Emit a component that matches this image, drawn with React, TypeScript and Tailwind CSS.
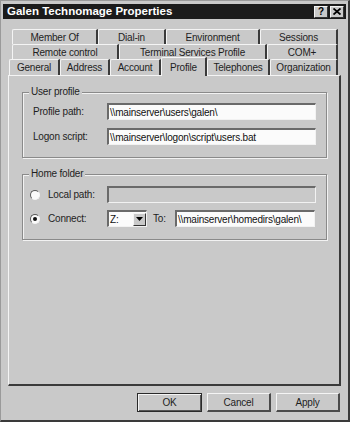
import React from "react";

const Tab = ({ w, label, first }: { w: number; label: string; first?: boolean }) => (
  <div
    className={`h-full flex items-center justify-center border-t border-l border-t-[#f4f4f4] border-l-[#f4f4f4] border-r-2 border-r-[#3a3a3a] rounded-tl-[2px] text-[10px] tracking-[-0.2px] text-[#1e1e1e] ${first ? "" : ""}`}
    style={{ width: w }}
  >
    {label}
  </div>
);

const TextBox = ({ w, value, disabled }: { w: number; value?: string; disabled?: boolean }) => (
  <div
    className={`h-[17px] border-t-2 border-l-2 border-t-[#6a6a6a] border-l-[#6a6a6a] border-b border-r border-b-[#f2f2f2] border-r-[#f2f2f2] flex items-center pl-[1px] text-[10px] tracking-[-0.2px] text-[#111] ${disabled ? "bg-[#c9c9c9]" : "bg-[#fbfbfb]"}`}
    style={{ width: w }}
  >
    {value}
  </div>
);

const Radio = ({ checked }: { checked?: boolean }) => (
  <div className="w-[10px] h-[10px] rounded-full border border-t-[#5a5a5a] border-l-[#5a5a5a] border-b-[#f4f4f4] border-r-[#f4f4f4] bg-[#fafafa] flex items-center justify-center">
    {checked && <div className="w-[4px] h-[4px] rounded-full bg-[#111]" />}
  </div>
);

const Group = ({ label, children }: { label: string; children: React.ReactNode }) => (
  <div className="relative ml-[13px] w-[305px] h-[66px] border border-[#8a8a8a] shadow-[inset_1px_1px_0_#f2f2f2,1px_1px_0_#f2f2f2]">
    <span className="absolute -top-[7px] left-[6px] px-[2px] bg-[#c9c9c9] text-[10px] tracking-[-0.2px] leading-[12px] text-[#1e1e1e]">
      {label}
    </span>
    {children}
  </div>
);

const Button = ({ label, w, def }: { label: string; w: number; def?: boolean }) => (
  <div
    className={`h-[19px] flex items-center justify-center text-[10px] tracking-[-0.2px] text-[#1e1e1e] ${
      def
        ? "border border-[#2a2a2a] shadow-[inset_1px_1px_0_#f4f4f4,inset_-1px_-1px_0_#555]"
        : "border-t border-l border-t-[#f4f4f4] border-l-[#f4f4f4] border-b-2 border-r-2 border-b-[#4a4a4a] border-r-[#4a4a4a]"
    }`}
    style={{ width: w }}
  >
    {label}
  </div>
);

export default function App() {
  return (
    <div className="w-[350px] h-[422px] bg-[#c9c9c9] border-l border-t border-l-[#9a9a9a] border-t-[#9a9a9a] border-r-2 border-b-2 border-r-[#3a3a3a] border-b-[#3a3a3a] overflow-hidden font-['Liberation_Sans',Arial,sans-serif] flex flex-col">
      {/* Title bar */}
      <div className="ml-[2px] mt-[3px] w-[343px] h-[15px] bg-[#1b1b1b] flex items-center justify-between pl-[4px] pr-[2px]">
        <span className="text-white font-bold text-[11.5px] leading-none tracking-[0px]">
          Galen Technomage Properties
        </span>
        <div className="flex gap-[2px]">
          <div className="w-[14px] h-[12px] bg-[#c9c9c9] border-t border-l border-t-[#f4f4f4] border-l-[#f4f4f4] border-b border-r border-b-[#333] border-r-[#333] flex items-center justify-center text-[10px] font-bold leading-none text-black">
            ?
          </div>
          <div className="w-[14px] h-[12px] bg-[#c9c9c9] border-t border-l border-t-[#f4f4f4] border-l-[#f4f4f4] border-b border-r border-b-[#333] border-r-[#333] flex items-center justify-center">
            <svg width="8" height="7" viewBox="0 0 8 7">
              <path d="M0.5 0.5 L7.5 6.5 M7.5 0.5 L0.5 6.5" stroke="#000" strokeWidth="1.8" />
            </svg>
          </div>
        </div>
      </div>

      {/* Tabs */}
      <div className="mt-[10px] ml-[11px] h-[15px] flex">
        <Tab w={86} label="Member Of" first />
        <Tab w={68} label="Dial-in" />
        <Tab w={94} label="Environment" />
        <Tab w={78} label="Sessions" />
      </div>
      <div className="ml-[11px] h-[15px] flex">
        <Tab w={107} label="Remote control" first />
        <Tab w={148} label="Terminal Services Profile" />
        <Tab w={71} label="COM+" />
      </div>
      <div className="ml-[8px] h-[16px] flex items-end">
        <Tab w={51} label="General" first />
        <Tab w={50} label="Address" />
        <Tab w={51} label="Account" />
        <div className="relative z-10 w-[46px] h-[19px] -mb-[1px] bg-[#c9c9c9] border-t border-l border-t-[#f4f4f4] border-l-[#f4f4f4] border-r-2 border-r-[#3a3a3a] rounded-tl-[2px] flex items-start pt-[2px] justify-center text-[10px] tracking-[-0.2px] text-[#1e1e1e]">
          Profile
        </div>
        <Tab w={63} label="Telephones" />
        <Tab w={68} label="Organization" />
      </div>

      {/* Panel */}
      <div className="ml-[7px] w-[333px] h-[311px] border-t border-l border-t-[#f4f4f4] border-l-[#f4f4f4] border-r-2 border-b-2 border-r-[#3a3a3a] border-b-[#3a3a3a] flex flex-col">
        <div className="mt-[16px]">
          <Group label="User profile">
            <div className="flex flex-col gap-[8px] mt-[10px] pl-[10px]">
              <div className="flex items-center">
                <span className="w-[74px] text-[10px] tracking-[-0.2px] text-[#1e1e1e]">Profile path:</span>
                <TextBox w={209} value="\\mainserver\users\galen\" />
              </div>
              <div className="flex items-center">
                <span className="w-[74px] text-[10px] tracking-[-0.2px] text-[#1e1e1e]">Logon script:</span>
                <TextBox w={209} value="\\mainserver\logon\script\users.bat" />
              </div>
            </div>
          </Group>
        </div>
        <div className="mt-[16px]">
          <Group label="Home folder">
            <div className="flex flex-col gap-[7px] mt-[11px] pl-[7px]">
              <div className="flex items-center">
                <Radio />
                <span className="ml-[8px] w-[59px] text-[10px] tracking-[-0.2px] text-[#1e1e1e]">Local path:</span>
                <TextBox w={209} disabled />
              </div>
              <div className="flex items-center">
                <Radio checked />
                <span className="ml-[8px] w-[59px] text-[10px] tracking-[-0.2px] text-[#1e1e1e]">Connect:</span>
                <div className="w-[40px] h-[17px] bg-[#fbfbfb] border-t-2 border-l-2 border-t-[#6a6a6a] border-l-[#6a6a6a] border-b border-r border-b-[#f2f2f2] border-r-[#f2f2f2] flex items-center justify-between text-[10px] text-[#111]">
                  <span className="pl-[1px]">Z:</span>
                  <div className="w-[13px] h-[13px] bg-[#c9c9c9] border-t border-l border-t-[#f4f4f4] border-l-[#f4f4f4] border-b border-r border-b-[#333] border-r-[#333] flex items-center justify-center">
                    <svg width="7" height="4" viewBox="0 0 7 4">
                      <path d="M0 0 H7 L3.5 4 Z" fill="#000" />
                    </svg>
                  </div>
                </div>
                <span className="ml-[6px] w-[22px] text-[10px] tracking-[-0.2px] text-[#1e1e1e]">To:</span>
                <TextBox w={140} value="\\mainserver\homedirs\galen\" />
              </div>
            </div>
          </Group>
        </div>
      </div>

      {/* Buttons */}
      <div className="mt-[7px] flex justify-end gap-[5px] pr-[8px]">
        <Button label="OK" w={65} def />
        <Button label="Cancel" w={64} />
        <Button label="Apply" w={64} />
      </div>
    </div>
  );
}
